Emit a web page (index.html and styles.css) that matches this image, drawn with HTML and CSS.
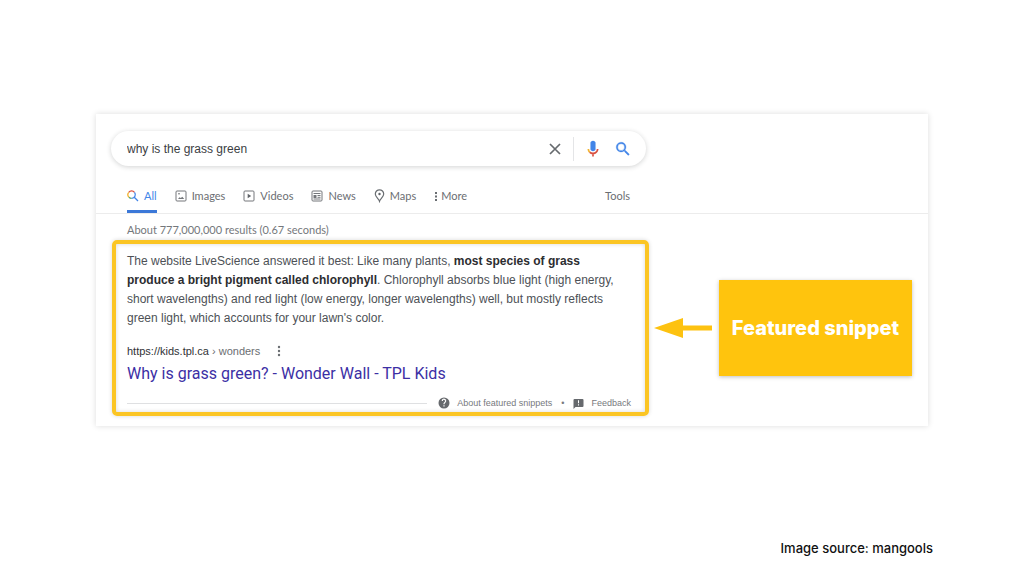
FILE: index.html
```html
<!DOCTYPE html>
<html lang="en">
<head>
<meta charset="utf-8">
<meta name="viewport" content="width=device-width, initial-scale=1">
<title>Featured snippet</title>
<link rel="stylesheet" href="styles.css">
</head>
<body>
<main class="card">
  <header class="header">
    <form class="search" role="search">
      <input class="search-input" type="text" aria-label="Search" value="why is the grass green">
      <button class="icon-button clear" type="button" aria-label="Clear">
        <svg width="12" height="12" viewBox="0 0 12 12"><path d="M1 1l10 10M11 1L1 11" stroke="#666a6e" stroke-width="1.700" fill="none"/></svg>
      </button>
      <button class="icon-button mic" type="button" aria-label="Search by voice">
        <svg width="18" height="18" viewBox="0 0 24 24"><path fill="#4285e8" d="M12 15c1.900 0 3.400-1.300 3.400-3V4c0-1.700-1.500-3-3.400-3S8.600 2.300 8.600 4v8c0 1.700 1.500 3 3.400 3z"/><path fill="#d95040" d="M10.900 18.900h2.200V22h-2.200z"/><path fill="#f2b430" d="M7 12H4.700c0 1.900.8 3.700 2.100 5l1.700-1.400C7.600 14.700 7 13.400 7 12z"/><path fill="#d95040" d="M12 16.800c-1.400 0-2.600-.5-3.500-1.400L6.900 17c1.300 1.200 3.200 2.200 5.100 2.200 3.900 0 7.300-3.300 7.300-7.200H17c0 2.800-2.200 4.800-5 4.800z"/></svg>
      </button>
      <button class="icon-button" type="submit" aria-label="Search">
        <svg width="18" height="18" viewBox="0 0 24 24"><path fill="#4285e8" stroke="#4285e8" stroke-width=".4" d="M15.500 14h-.8l-.3-.3A6.500 6.500 0 1 0 13.700 14.400l.3.3v.8l5 5 1.500-1.500-5-5zm-6 0a4.500 4.500 0 1 1 0-9 4.500 4.500 0 0 1 0 9z"/></svg>
      </button>
    </form>
    <nav class="tabs">
      <a class="tab active" href="#">
        <svg width="12" height="12" viewBox="0 0 12 12" fill="none" stroke-width="1.300"><path stroke="#d95040" d="M1.700 2.300A3.700 3.700 0 0 1 7.500 2.300"/><path stroke="#f2b430" d="M1.700 2.300A3.700 3.700 0 0 0 2 7.200"/><path stroke="#58a86a" d="M2 7.200A3.700 3.700 0 0 0 4.700 8.300"/><path stroke="#4285e8" d="M4.700 8.300A3.700 3.700 0 0 0 7.500 2.300M7.300 7.200L11 11"/></svg>
        <span>All</span>
      </a>
      <a class="tab" href="#">
        <svg width="12" height="12" viewBox="0 0 12 12" fill="none" stroke="#74777b"><rect x="1" y="1" width="10" height="10" rx="1"/><path d="M3 9h6.200L7.300 6.700 5.800 8 4.500 7.200z" fill="#74777b" stroke="none"/><path d="M3 3.800h2"/></svg>
        <span>Images</span>
      </a>
      <a class="tab" href="#">
        <svg width="12" height="12" viewBox="0 0 12 12" fill="none" stroke="#74777b"><rect x="1" y="1" width="10" height="10" rx="1"/><path d="M4.700 3.800L8.200 6 4.700 8.200z" fill="#5f6368" stroke="none"/></svg>
        <span>Videos</span>
      </a>
      <a class="tab" href="#">
        <svg width="12" height="12" viewBox="0 0 12 12" fill="none" stroke="#74777b"><rect x="1" y="1" width="10" height="10" rx="1"/><path d="M2.500 3.500h7M6.500 5.500h3M6.500 7.300h3M2.500 9h7"/><path d="M2.500 5h3v3h-3z" fill="#74777b" stroke="none"/></svg>
        <span>News</span>
      </a>
      <a class="tab" href="#">
        <svg width="11" height="14" viewBox="0 0 11 14" fill="none" stroke="#6a6e72" stroke-width="1.200"><path d="M5.500 12.300C4.800 10 1.300 7.800 1.300 5a4.200 4.200 0 0 1 8.400 0c0 2.800-3.500 5-4.200 7.300z"/><circle cx="5.500" cy="5" r="1.200" fill="#5f6368" stroke="none"/></svg>
        <span>Maps</span>
      </a>
      <a class="tab more" href="#">
        <svg width="4" height="12" viewBox="0 0 4 12" fill="#6a6e72"><path d="M1 2h2v2H1zM1 5.500h2v2H1zM1 9h2v2H1z"/></svg>
        <span>More</span>
      </a>
      <a class="tab tools" href="#">Tools</a>
    </nav>
  </header>
  <p class="stats">About 777,000,000 results (0.67 seconds)</p>
  <div class="annotated">
    <section class="snippet">
      <p class="answer">The website LiveScience answered it best: Like many plants, <b>most species of grass</b> <b>produce a bright pigment called chlorophyll</b>. Chlorophyll absorbs blue light (high energy, short wavelengths) and red light (low energy, longer wavelengths) well, but mostly reflects green light, which accounts for your lawn's color.</p>
      <div class="source">
        <cite class="url">https://kids.tpl.ca <span class="crumb">› wonders</span></cite>
        <button class="icon-button" type="button" aria-label="About this result">
          <svg width="4" height="12" viewBox="0 0 4 12" fill="#6a6e72"><circle cx="2" cy="2" r="1.200"/><circle cx="2" cy="6" r="1.200"/><circle cx="2" cy="10" r="1.200"/></svg>
        </button>
      </div>
      <h1 class="title"><a href="#">Why is grass green? - Wonder Wall - TPL Kids</a></h1>
      <footer class="notes">
        <span class="rule"></span>
        <a class="note" href="#">
          <svg width="12" height="12" viewBox="0 0 24 24"><path fill="#66696d" d="M12 1a11 11 0 1 0 0 22 11 11 0 0 0 0-22zm1.200 18h-2.400v-2.300h2.400zm2.300-8.600l-1 1c-.8.8-1.300 1.500-1.300 3.100h-2.400v-.6c0-1.200.5-2.300 1.300-3.100l1.400-1.400a2.100 2.100 0 1 0-3.600-1.500H7.500a4.500 4.500 0 1 1 8 2.500z"/></svg>
          <span>About featured snippets</span>
        </a>
        <span class="dot">•</span>
        <a class="note" href="#">
          <svg width="11" height="11" viewBox="0 0 22 22"><path fill="#66696d" d="M3 2h16a2 2 0 0 1 2 2v12a2 2 0 0 1-2 2H5l-4 4V4a2 2 0 0 1 2-2zm7 2.500v6h2v-6zm0 8v2.500h2v-2.500z"/></svg>
          <span>Feedback</span>
        </a>
      </footer>
    </section>
    <svg class="arrow" width="58" height="22" viewBox="0 0 58 22"><path d="M0 11L29 1v7.500h29v5H29V21z" fill="#fdc210"/></svg>
    <div class="callout">Featured snippet</div>
  </div>
</main>
<p class="credit">Image source: mangools</p>
</body>
</html>
```
FILE: styles.css
```css
* {
  box-sizing: border-box;
}

body {
  margin: 0;
  padding: 114px 91px 0 96px;
  background: #fff;
  font-family: "Liberation Sans", Arial, sans-serif;
  color: #4d5156;
}

p,
h1 {
  margin: 0;
}

a {
  color: inherit;
  text-decoration: none;
}

svg {
  display: block;
  flex: none;
}

.card {
  margin-right: 5px;
  padding-bottom: 10px;
  background: #fff;
  box-shadow: 0 0 6px rgba(0, 0, 0, 0.14);
}

.header {
  padding: 17px 15px 0;
  border-bottom: 1px solid #ececec;
}

.search {
  display: flex;
  align-items: center;
  max-width: 535px;
  height: 35px;
  padding: 0 14px 0 16px;
  border-radius: 18px;
  box-shadow: 0 1px 5px rgba(32, 33, 36, 0.2);
}

.search-input {
  flex: 1;
  min-width: 0;
  padding: 0;
  border: 0;
  outline: 0;
  background: none;
  font: 12px "Liberation Sans", Arial, sans-serif;
  color: #3c4043;
}

.icon-button {
  display: flex;
  padding: 0;
  border: 0;
  background: none;
}

.clear {
  margin-right: 12px;
}

.mic {
  margin-right: 12px;
  padding: 3px 0 3px 10px;
  border-left: 1px solid #e4e5e7;
}

.tabs {
  display: flex;
  gap: 18px;
  max-width: 519px;
  margin-top: 14px;
  padding-left: 16px;
  font: 11px/16px Lato, "Liberation Sans", sans-serif;
  color: #6b6e72;
}

.tab {
  display: flex;
  align-items: center;
  gap: 5px;
  height: 33px;
  padding-top: 2px;
  border-bottom: 3px solid transparent;
}

.active {
  color: #4285e8;
  border-color: #3b78d8;
}

.more {
  gap: 3px;
}

.tools {
  margin-left: auto;
}

.stats {
  padding: 8px 31px 2px;
  font: 11px/16px Lato, "Liberation Sans", sans-serif;
  color: #74777b;
}

.annotated {
  display: flex;
  align-items: center;
  padding: 0 16px;
}

.snippet {
  flex: 1;
  padding: 8px 14px 2px 11px;
  border: 4px solid #fbc524;
  border-radius: 5px;
  box-shadow: 0 0 4px rgba(0, 0, 0, 0.16), inset 0 0 4px rgba(0, 0, 0, 0.16);
}

.answer {
  padding-right: 8px;
  font-size: 12px;
  line-height: 19px;
}

.answer b {
  color: #2c2d30;
}

.source {
  display: flex;
  gap: 17px;
  align-items: center;
  margin-top: 15px;
  font-size: 11px;
  line-height: 16px;
}

.url {
  font-style: normal;
  color: #303236;
}

.crumb {
  color: #6b6e72;
}

.title {
  margin-top: 4px;
  font: 400 16px/22px Roboto, Arial, sans-serif;
  color: #3c2fa5;
}

.notes {
  display: flex;
  align-items: center;
  margin-top: 11px;
  font-size: 9px;
  line-height: 14px;
  color: #77797d;
}

.rule {
  flex: 1;
  height: 1px;
  margin-right: 11px;
  background: #dfe0e2;
}

.note {
  display: flex;
  align-items: center;
  gap: 7px;
}

.dot {
  margin: 0 9px;
}

.arrow {
  margin: 0 7px 0 5px;
}

.callout {
  flex: none;
  width: 193px;
  padding: 36px 0;
  background: #ffc40d;
  box-shadow: 0 1px 4px rgba(0, 0, 0, 0.25);
  font: 800 20px/24px Inter, sans-serif;
  text-align: center;
  color: #fff;
}

.credit {
  padding: 113px 0 0;
  font: 500 13px/18px Inter, sans-serif;
  text-align: right;
  color: #111;
}
```
